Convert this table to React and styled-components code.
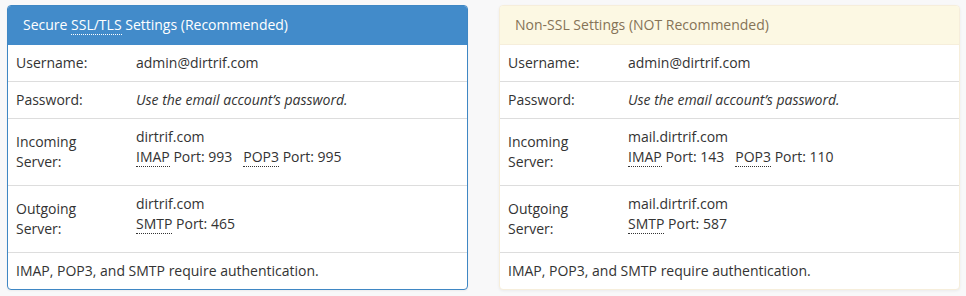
import React from "react";
import styled, { createGlobalStyle, css } from "styled-components";

const GlobalStyle = createGlobalStyle`
  html, body {
    margin: 0;
    padding: 0;
    background: #f8f8f9;
  }
  body {
    font-family: "Open Sans", "Liberation Sans", sans-serif;
    font-size: 14px;
    line-height: 20px;
    color: #333;
  }
`;

const Page = styled.div`
  display: grid;
  grid-template-columns: 461px 461px;
  column-gap: 31px;
  padding: 5px 7px;
  align-items: start;
`;

const variants = {
  primary: css`
    border-color: #3f87c4;
    box-shadow: 0 1px 2px rgba(0, 0, 0, 0.05);
  `,
  warning: css`
    border-color: #f6eedb;
    box-shadow: 0 1px 3px rgba(0, 0, 0, 0.06);
  `
};

const headings = {
  primary: css`
    background: #428bca;
    color: #fff;
    border-bottom-color: #428bca;
  `,
  warning: css`
    background: #fcf8e3;
    color: #857357;
    border-bottom-color: #f6eedb;
  `
};

const Panel = styled.div`
  background: #fff;
  border: 1px solid;
  border-radius: 4px;
  overflow: hidden;
  ${p => variants[p.$variant]}
`;

const Heading = styled.div`
  padding: 10px 15px;
  font-size: 14px;
  line-height: 18px;
  border-bottom: 1px solid;
  ${p => headings[p.$variant]}
`;

const Row = styled.div`
  display: grid;
  grid-template-columns: 120px 1fr;
  align-items: center;
  & + & {
    border-top: 1px solid #ddd;
  }
`;

const Label = styled.div`
  padding: 8px;
`;

const Value = styled.div`
  padding: 8px;
  padding-bottom: ${p => (p.$stacked ? "18px" : "8px")};
  font-style: ${p => (p.$italic ? "italic" : "normal")};
`;

const Footer = styled.div`
  padding: 8px;
  border-top: 1px solid #ddd;
`;

const Abbr = styled.abbr`
  text-decoration: none;
  border-bottom: 1px dotted currentColor;
  cursor: help;
`;

const Gap = styled.span`
  display: inline-block;
  width: 11px;
`;

function SettingsPanel({ variant, title, host, imap, pop3, smtp }) {
  return (
    <Panel $variant={variant}>
      <Heading $variant={variant}>{title}</Heading>
      <Row>
        <Label>Username:</Label>
        <Value>admin@dirtrif.com</Value>
      </Row>
      <Row>
        <Label>Password:</Label>
        <Value $italic>Use the email account’s password.</Value>
      </Row>
      <Row>
        <Label>
          Incoming
          <br />
          Server:
        </Label>
        <Value $stacked>
          {host}
          <br />
          <Abbr title="Internet Message Access Protocol">IMAP</Abbr> Port: {imap}
          <Gap />
          <Abbr title="Post Office Protocol 3">POP3</Abbr> Port: {pop3}
        </Value>
      </Row>
      <Row>
        <Label>
          Outgoing
          <br />
          Server:
        </Label>
        <Value $stacked>
          {host}
          <br />
          <Abbr title="Simple Mail Transfer Protocol">SMTP</Abbr> Port: {smtp}
        </Value>
      </Row>
      <Footer>IMAP, POP3, and SMTP require authentication.</Footer>
    </Panel>
  );
}

export default function App() {
  return (
    <>
      <GlobalStyle />
      <Page>
        <SettingsPanel
          variant="primary"
          title={
            <>
              Secure <Abbr title="Secure Sockets Layer/Transport Layer Security">SSL/TLS</Abbr> Settings
              (Recommended)
            </>
          }
          host="dirtrif.com"
          imap="993"
          pop3="995"
          smtp="465"
        />
        <SettingsPanel
          variant="warning"
          title="Non-SSL Settings (NOT Recommended)"
          host="mail.dirtrif.com"
          imap="143"
          pop3="110"
          smtp="587"
        />
      </Page>
    </>
  );
}
